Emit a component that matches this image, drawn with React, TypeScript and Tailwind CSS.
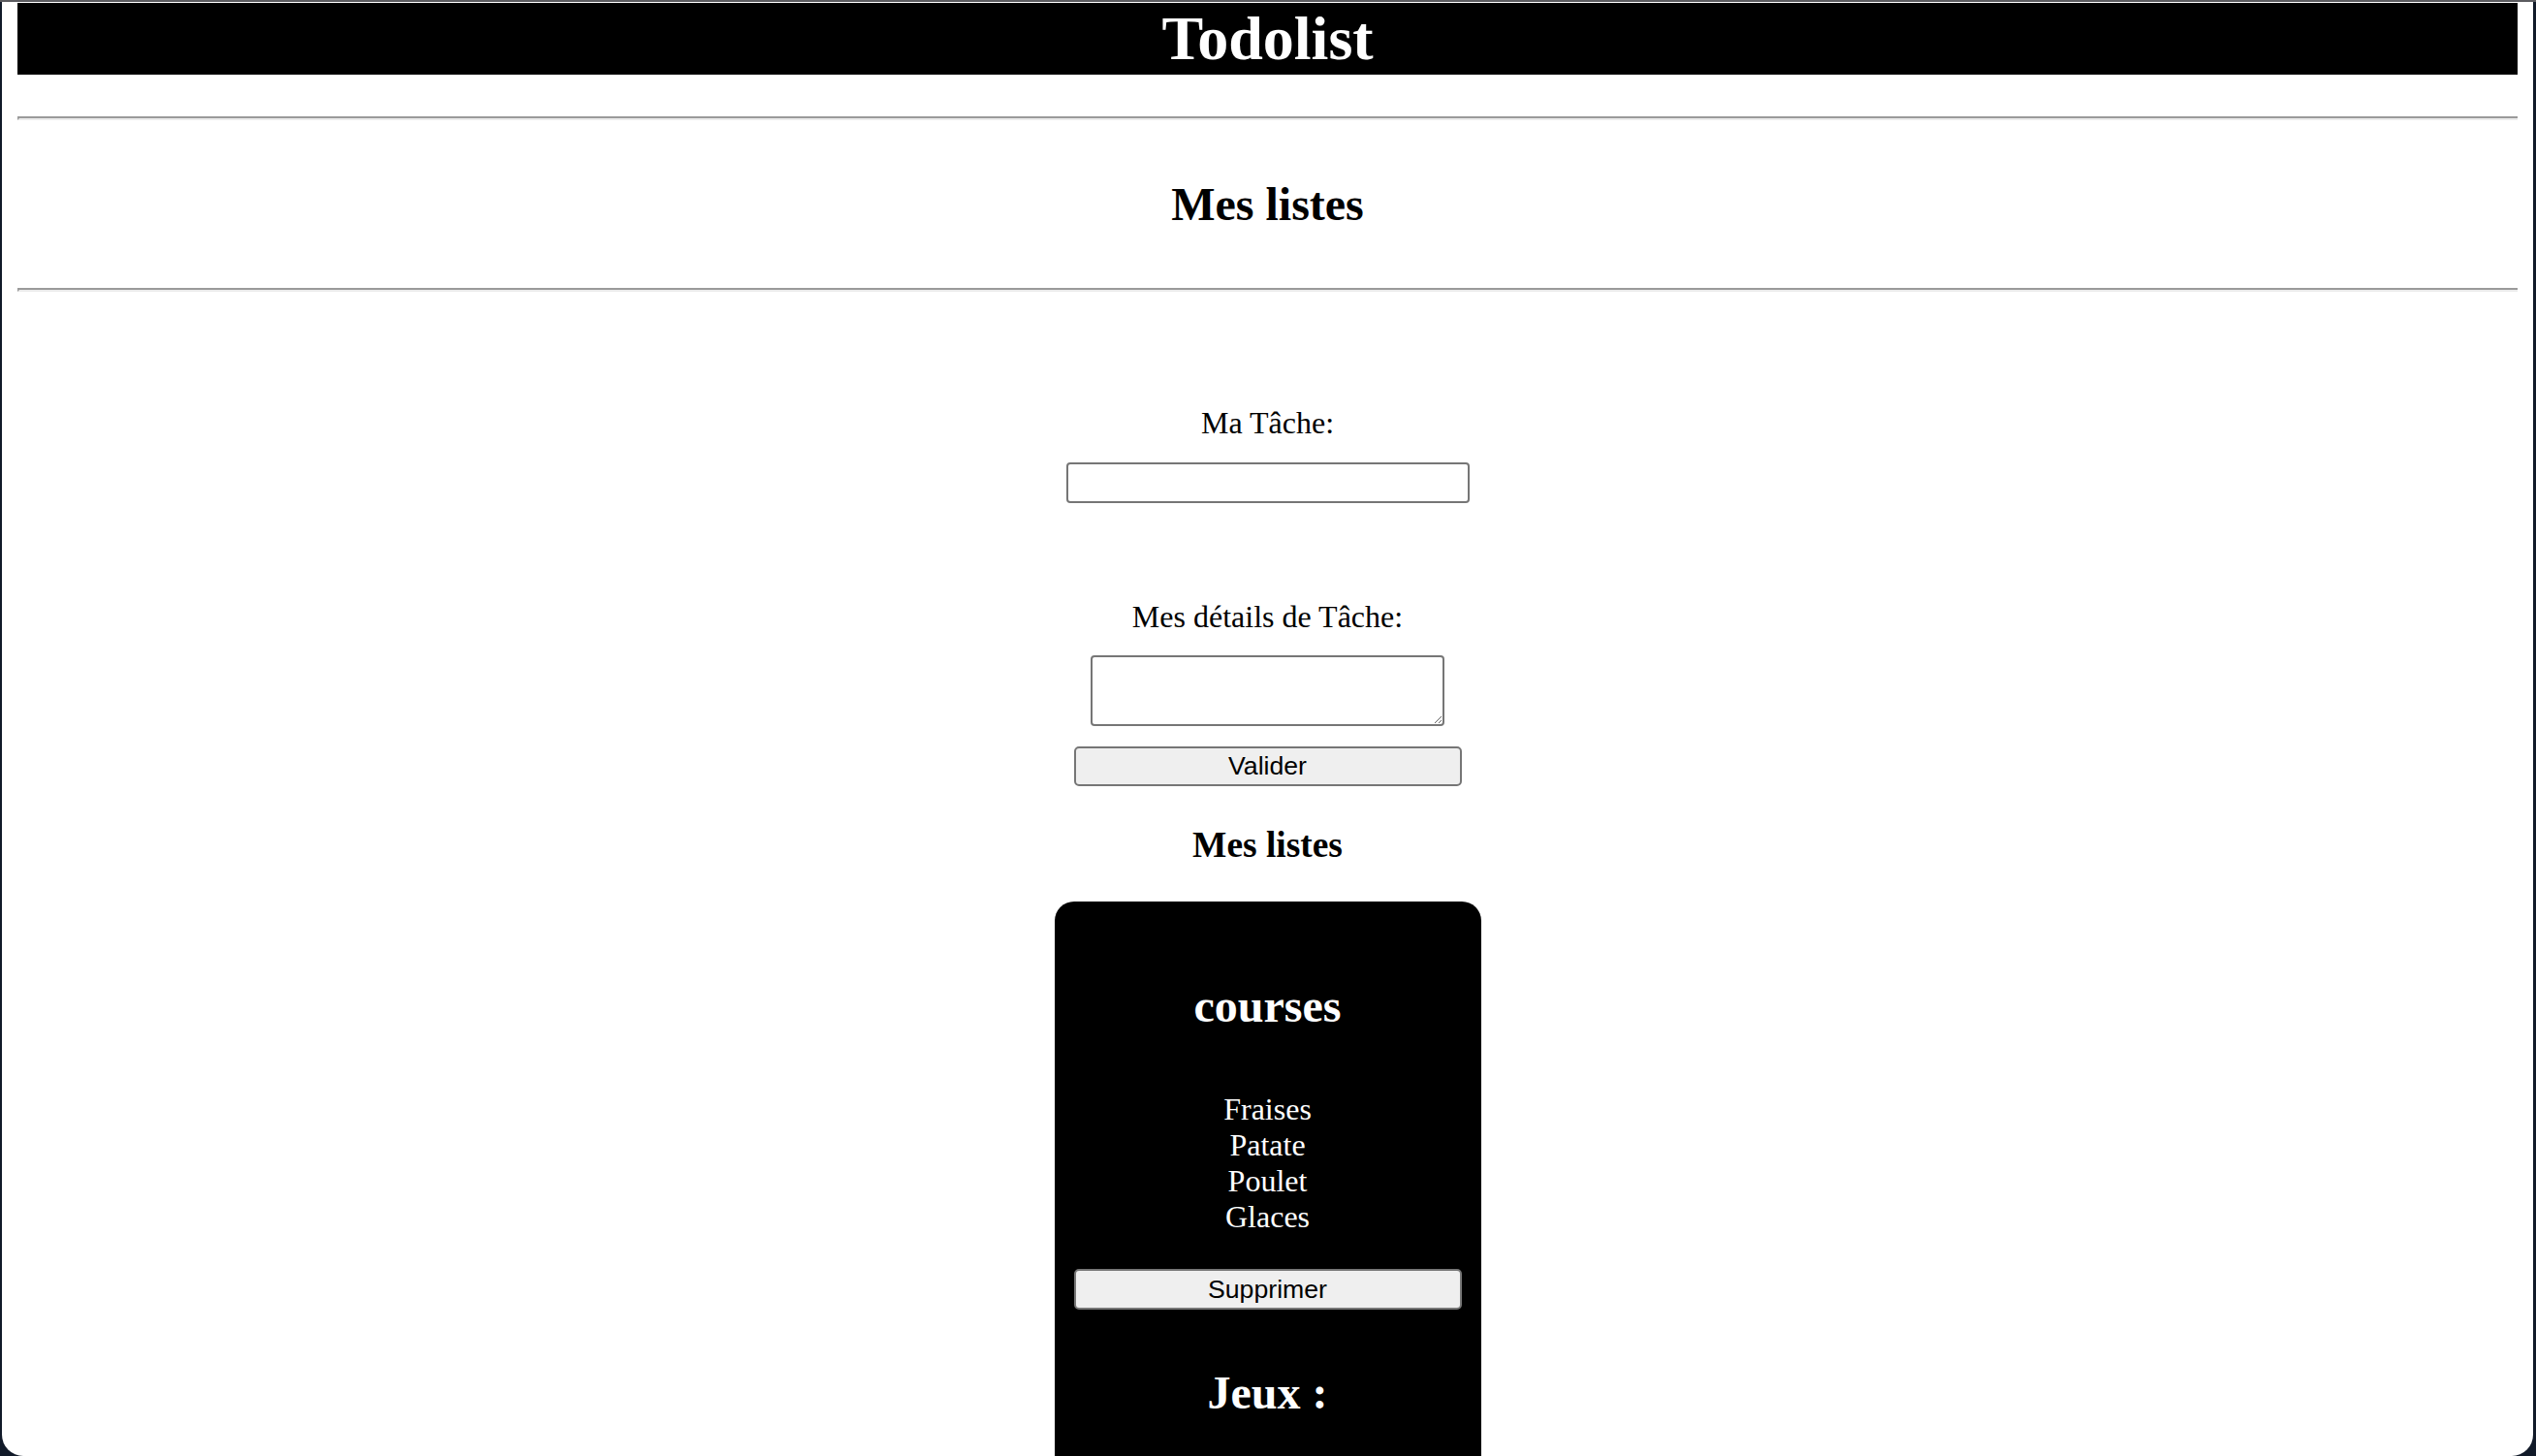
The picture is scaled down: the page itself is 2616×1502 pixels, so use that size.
const serif = "font-['Liberation_Serif','Times_New_Roman',serif]";
const sans = "font-['Liberation_Sans',Arial,sans-serif]";

const courses = ["Fraises", "Patate", "Poulet", "Glaces"];

function Rule({ top }: { top: string }) {
  return (
    <hr className={`${top} h-0 border-0 border-t-2 border-b-2 border-l-2 border-t-[#9a9a9a] border-l-[#9a9a9a] border-b-[#ececec]`} />
  );
}

function ListCard() {
  return (
    <div className="mt-[37px] w-[440px] rounded-t-[20px] bg-black px-[20px] pt-[40px] pb-[40px] text-center text-white">
      <h2 className="mt-[40px] text-[48px] font-bold leading-[55px]">courses</h2>
      <div className="mt-[61px] text-[32px] leading-[37px]">
        {courses.map((c) => (
          <p key={c}>{c}</p>
        ))}
      </div>
      <button
        className={`${sans} mt-[35px] h-[42px] w-[400px] rounded-[5px] border-2 border-[#767676] bg-[#efefef] text-[26.67px] leading-none text-black`}
      >
        Supprimer
      </button>
      <h2 className="mt-[58px] text-[48px] font-bold leading-[55px]">Jeux :</h2>
    </div>
  );
}

export default function App() {
  return (
    <div className="h-[1502px] w-[2616px] overflow-hidden border-t-2 border-[#5c5c60] bg-[#111a29]">
      <div className={`${serif} ml-[2px] mr-[3px] h-[1500px] overflow-hidden rounded-b-[22px] bg-white px-[16px] pt-[1px] text-black`}>
        <div className="h-[74px] bg-black">
          <h1 className="text-center text-[64px] font-bold leading-[74px] text-white">Todolist</h1>
        </div>

        <Rule top="mt-[43px]" />
        <h2 className="mt-[59px] text-center text-[48px] font-bold leading-[55px]">Mes listes</h2>
        <Rule top="mt-[59px]" />

        <form className="flex flex-col items-center">
          <label className="mt-[117px] text-[32px] leading-[37px]">Ma Tâche:</label>
          <input
            type="text"
            className="mt-[22px] h-[42px] w-[416px] rounded-[4px] border-2 border-[#767676] bg-white"
          />

          <label className="mt-[99px] text-[32px] leading-[37px]">Mes détails de Tâche:</label>
          <textarea className="mt-[21px] h-[73px] w-[365px] rounded-[4px] border-2 border-[#767676] bg-white" />

          <button
            type="button"
            className={`${sans} mt-[21px] h-[41px] w-[400px] rounded-[5px] border-2 border-[#767676] bg-[#efefef] text-[26.67px] leading-none text-black`}
          >
            Valider
          </button>

          <h3 className="mt-[39px] text-[37.44px] font-bold leading-[43px]">Mes listes</h3>

          <ListCard />
        </form>
      </div>
    </div>
  );
}
